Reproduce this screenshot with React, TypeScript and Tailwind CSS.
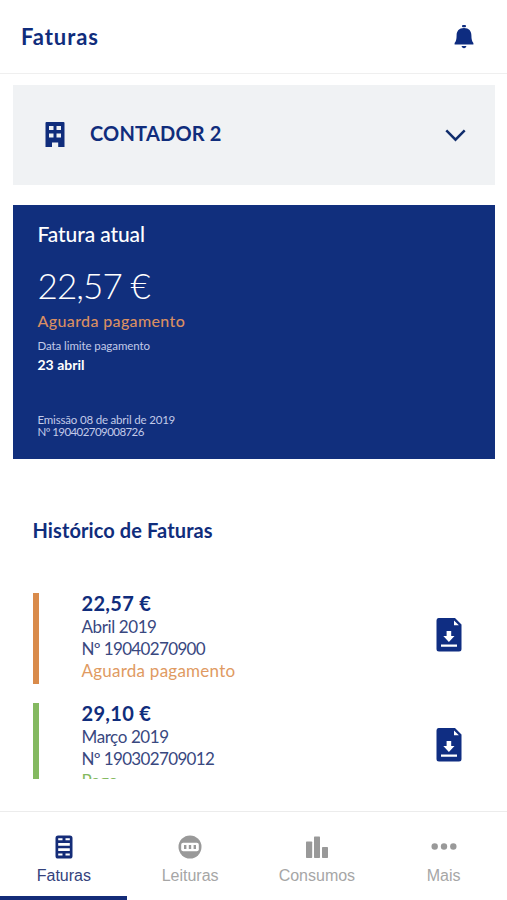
import type { ReactNode } from 'react';

function Building() {
  return (
    <svg width="20" height="26" viewBox="0 0 20 26" fill="#102d7c">
      <path fillRule="evenodd" d="M1.500 0h17a1 1 0 0 1 1 1v24h-6.300v-4.600H7V25H.5V1a1 1 0 0 1 1-1ZM4 4v4h4.500V4H4Zm7.500 0v4H16V4h-4.500ZM4 11.500v4h4.500v-4H4Zm7.500 0v4H16v-4h-4.500Z" />
    </svg>
  );
}

function Bell() {
  return (
    <svg width="20" height="24" viewBox="0 0 20 24" fill="#0e2c80">
      <rect x="8" y="0" width="4" height="2.200" rx="1" />
      <path d="M10 3c5 0 7.400 3.200 7.400 7.400 0 4 .6 5.700 2 7.500v1.600H.6v-1.600c1.400-1.800 2-3.500 2-7.500C2.600 6.200 5 3 10 3Z" />
      <path d="M7.600 21h4.800c-.3 1.400-1 2.200-2.400 2.200s-2.100-.8-2.400-2.200Z" />
    </svg>
  );
}

function FileDownload() {
  return (
    <svg width="26" height="34" viewBox="0 0 26 34">
      <path fill="#0f2d82" d="M2.500 0H19l6.500 6.500V31a2.500 2.500 0 0 1-2.500 2.500H3A2.500 2.500 0 0 1 .5 31V2.500A2.500 2.500 0 0 1 2.500 0Z" />
      <path fill="#fff" d="M18 2.400v4.900h4.900L18 2.400ZM10.600 13h4.600v5h3.300L12.900 24 7.300 18h3.300v-5ZM5 26.400h16v2.300H5z" />
    </svg>
  );
}

function InvoiceIcon() {
  return (
    <svg width="18" height="24" viewBox="0 0 18 24">
      <rect x=".5" y=".5" width="17" height="23" rx="2.600" fill="#142c78" />
      <path fill="#fff" d="M3.200 3.300h4.300v2H3.200zM10.500 3.300h4.300v2h-4.300zM3.200 7.900h11.600v2.900H3.200zM3.200 13.200h11.600v2.900H3.200zM3.200 18.600h4.300v2H3.200zM10.500 18.600h4.300v2h-4.300z" />
    </svg>
  );
}

function MeterIcon() {
  return (
    <svg width="24" height="24" viewBox="0 0 24 24">
      <circle cx="12" cy="12" r="11.500" fill="#999" />
      <rect x="3.200" y="7.700" width="17.600" height="8.600" rx="2" fill="#fff" />
      <path fill="#999" d="M6 10h2.400v4H6zM10.800 10h2.400v4h-2.400zM15.600 10H18v4h-2.400z" />
    </svg>
  );
}

function BarsIcon() {
  return (
    <svg width="24" height="24" viewBox="0 0 24 24" fill="#999">
      <rect x="1" y="6.500" width="6.200" height="16.500" rx=".7" />
      <rect x="9" y="1.500" width="6" height="21.500" rx=".7" />
      <rect x="17" y="12" width="6" height="11" rx=".7" />
    </svg>
  );
}

function DotsIcon() {
  return (
    <svg width="26" height="24" viewBox="0 0 26 24" fill="#999">
      <circle cx="3.700" cy="11.500" r="3.200" />
      <circle cx="13" cy="11.500" r="3.200" />
      <circle cx="22.300" cy="11.500" r="3.200" />
    </svg>
  );
}

function Invoice({ bar, children }: { bar: string; children: ReactNode }) {
  return (
    <li className="flex h-[91px] shrink-0">
      <span className={`w-[6px] ${bar}`} />
      <div className="ml-[42.500px] flex-1 whitespace-nowrap text-[17px] text-[#39487f]">{children}</div>
      <div className="mr-[45px] pt-[25px]">
        <FileDownload />
      </div>
    </li>
  );
}

function Tab({ label, icon, active = false }: { label: string; icon: ReactNode; active?: boolean }) {
  return (
    <button
      className={`flex w-1/4 flex-col items-center border-b-4 pt-[23px] font-['Liberation_Sans',sans-serif] text-[16px] ${
        active ? 'border-[#142c78] pl-px text-[#34427c]' : 'border-transparent text-[#a6a6a6]'
      }`}
    >
      <span className="flex h-6 items-center">{icon}</span>
      <span className="mt-[7px] leading-[20px]">{label}</span>
    </button>
  );
}

export default function App() {
  return (
    <div className="flex h-[900px] w-[507px] flex-col overflow-hidden bg-white font-['Lato',sans-serif] text-[#102d7c]">
      <header className="flex h-[74px] shrink-0 items-center justify-between border-b border-[#efefef] pl-[21px] pr-[33px]">
        <h1 className="text-[22px] font-bold leading-[28px] tracking-[0.900px]">Faturas</h1>
        <Bell />
      </header>

      <main className="flex min-h-0 flex-1 flex-col">
        <button className="mx-[13px] mt-[11px] flex h-[100px] w-[482px] shrink-0 items-center bg-[#f0f2f4] pl-[32px] pr-[29px]">
          <Building />
          <span className="ml-[25px] flex-1 pb-[4px] text-left text-[20px] font-bold leading-[24px] tracking-[0.200px]">CONTADOR 2</span>
          <svg width="21" height="13" viewBox="0 0 21 13" fill="none" stroke="#102d6c" strokeWidth="2.500">
            <path d="m1.300 1.400 9.200 9.300 9.200-9.300" />
          </svg>
        </button>

        <section className="ml-[13px] mr-[12px] mt-[20px] flex h-[254px] shrink-0 flex-col bg-[#112f7d] pl-[24.500px] pt-[17px] text-white">
          <h2 className="text-[21px] font-medium leading-[24px] tracking-[-0.100px]">Fatura atual</h2>
          <p className="mt-[19px] text-[35px] font-light leading-[40px] tracking-[-0.900px]">22,57 €</p>
          <p className="mt-[6px] text-[16px] font-medium leading-[20px] tracking-[0.360px] text-[#d98e62]">Aguarda pagamento</p>
          <p className="mt-[7px] text-[11.500px] leading-[16px] tracking-[-0.080px] text-[#c2cae8]">Data limite pagamento</p>
          <p className="mt-[2px] text-[14px] font-bold leading-[18px]">23 abril</p>
          <div className="mt-[40px] text-[11.500px] leading-[12px] text-[#c2cae8]">
            <p className="tracking-[-0.180px]">Emissão 08 de abril de 2019</p>
            <p className="tracking-[-0.560px]">Nº 190402709008726</p>
          </div>
        </section>

        <h2 className="ml-[32.500px] mt-[59px] text-[20px] font-bold leading-[24px] tracking-[0.100px]">Histórico de Faturas</h2>

        <ul className="ml-[33px] mt-[51px] flex h-[186px] flex-col gap-[19px] overflow-hidden">
          <Invoice bar="bg-[#d98b4b]">
            <p className="mb-[3px] text-[20px] font-bold leading-[20px] tracking-[0.300px] text-[#102d7c]">22,57 €</p>
            <p className="leading-[22px] tracking-[-0.400px]">Abril 2019</p>
            <p className="leading-[22px] tracking-[-0.650px]">Nº 19040270900</p>
            <p className="leading-[22px] tracking-[0.240px] text-[#e09a62]">Aguarda pagamento</p>
          </Invoice>
          <Invoice bar="bg-[#84b960]">
            <p className="mb-[3px] text-[20px] font-bold leading-[20px] tracking-[0.300px] text-[#102d7c]">29,10 €</p>
            <p className="leading-[22px] tracking-[-0.400px]">Março 2019</p>
            <p className="leading-[22px] tracking-[-0.650px]">Nº 190302709012</p>
            <p className="leading-[22px] text-[#84b960]">Pago</p>
          </Invoice>
        </ul>
      </main>

      <nav className="flex h-[89px] shrink-0 border-t border-[#ececec]">
        <Tab label="Faturas" icon={<InvoiceIcon />} active />
        <Tab label="Leituras" icon={<MeterIcon />} />
        <Tab label="Consumos" icon={<BarsIcon />} />
        <Tab label="Mais" icon={<DotsIcon />} />
      </nav>
    </div>
  );
}
